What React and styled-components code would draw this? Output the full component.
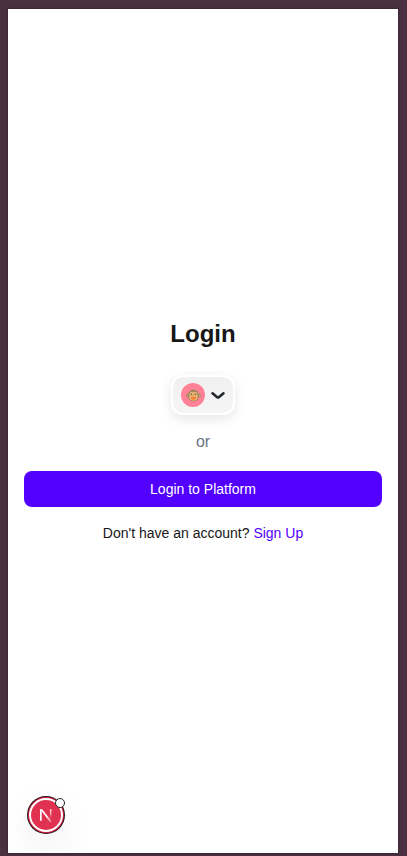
import React from "react";
import styled, { createGlobalStyle } from "styled-components";

const GlobalStyle = createGlobalStyle`
  * { box-sizing: border-box; }
  body { margin: 0; background: #4b3042; font-family: "Liberation Sans", Arial, sans-serif; }
`;

const Desktop = styled.div`
  height: 856px;
  padding: 9px 9px 3px 8px;
  background: #4b3042;
  overflow: hidden;
`;

const Screen = styled.main`
  position: relative;
  display: flex;
  flex-direction: column;
  align-items: center;
  height: 844px;
  padding: 309px 16px 0;
  background: #fff;
  color: #171717;
  box-shadow: 0 0 0 1px #3d2a38, 0 0 4px rgba(25, 10, 25, 0.2);
  overflow: hidden;
`;

const Title = styled.h1`
  margin: 0 0 25px;
  font-size: 24px;
  line-height: 32px;
  font-weight: 700;
`;

const WalletButton = styled.button`
  display: flex;
  align-items: center;
  gap: 6px;
  width: 64px;
  height: 40px;
  padding: 0 8px;
  border: 2px solid #fff;
  border-radius: 12px;
  background: linear-gradient(#f0f0f0, #f5f5f5) padding-box;
  box-shadow: 0 4px 12px rgba(0, 0, 0, 0.1);
`;

const Avatar = styled.span`
  display: flex;
  flex: none;
  align-items: center;
  justify-content: center;
  width: 24px;
  height: 24px;
  border-radius: 50%;
  background: #ff8296;
`;

const Divider = styled.p`
  margin: 15px 0 17px;
  color: #6a7282;
  font-size: 16px;
  line-height: 24px;
`;

const PrimaryButton = styled.button`
  width: 100%;
  height: 36px;
  border: 0;
  border-radius: 8px;
  background: #5200ff;
  color: #fff;
  font: 14px/20px "Liberation Sans", Arial, sans-serif;
`;

const Prompt = styled.p`
  margin: 16px 0 0;
  font-size: 14px;
  line-height: 20px;
`;

const SignUp = styled.a`
  color: #5200ff;
`;

const DevBadge = styled.div`
  position: absolute;
  left: 19px;
  top: 787px;
  width: 38px;
  height: 38px;
  border-radius: 50%;
  box-shadow: 0 14px 36px rgba(0, 0, 0, 0.075);
  svg { display: block; overflow: visible; }
`;

function Monkey() {
  return (
    <svg width="15" height="13" viewBox="0 0 15 13">
      <circle cx="2" cy="6.5" r="1.9" fill="#b08a62" />
      <circle cx="13" cy="6.5" r="1.9" fill="#b08a62" />
      <circle cx="2.1" cy="6.5" r="0.9" fill="#d9a972" />
      <circle cx="12.9" cy="6.5" r="0.9" fill="#d9a972" />
      <ellipse cx="7.5" cy="6.4" rx="5.6" ry="6" fill="#a5835d" />
      <path d="M7.5 3.2C5.4 1.9 3.2 3.1 3.5 5.8 2.6 8.3 3.5 11.7 7.5 11.7s4.9-3.4 4-5.9C11.8 3.1 9.6 1.9 7.5 3.2Z" fill="#e2b372" />
      <circle cx="5.5" cy="5.3" r="0.7" fill="#605340" />
      <circle cx="9.5" cy="5.3" r="0.7" fill="#605340" />
      <path d="M6.9 6.5h1.2" stroke="#a77d4e" strokeWidth=".5" />
      <path d="M5 7.7Q7.5 8.2 10 7.7 9.8 10.7 7.5 10.7T5 7.7Z" fill="#ff7a2e" />
    </svg>
  );
}

function Chevron() {
  return (
    <svg width="14" height="8" viewBox="0 0 14 8" fill="none">
      <path d="M1.5 2.2 6.2 6.2Q7 6.8 7.8 6.2L12.5 2.2" stroke="#22252b" strokeWidth="2.5" strokeLinecap="round" strokeLinejoin="round" />
    </svg>
  );
}

function DevIcon() {
  return (
    <svg width="38" height="38" viewBox="0 0 38 38" fill="none">
      <defs>
        <linearGradient id="diagonal" x1="20" y1="20" x2="24.5" y2="26" gradientUnits="userSpaceOnUse">
          <stop stopColor="#fff" />
          <stop offset="1" stopColor="#fff" stopOpacity="0.25" />
        </linearGradient>
        <linearGradient id="stem" x1="23.6" y1="14" x2="23.6" y2="22" gradientUnits="userSpaceOnUse">
          <stop stopColor="#fff" stopOpacity="0.9" />
          <stop offset="1" stopColor="#fff" stopOpacity="0" />
        </linearGradient>
      </defs>
      <circle cx="19" cy="19" r="19" fill="#24141a" />
      <circle cx="19" cy="19" r="18" fill="#d71f40" />
      <circle cx="19" cy="19" r="17" fill="#fff" />
      <circle cx="19" cy="19" r="15" fill="#e03250" />
      <path d="M13 13.3h1.7v11.5H13Z" fill="#fff" />
      <path d="M13.2 13.3h2L24.7 25.3 23.2 26.5Z" fill="url(#diagonal)" />
      <path d="M22.9 13.3h1.6V22h-1.6Z" fill="url(#stem)" />
      <circle cx="33" cy="7" r="4.5" fill="#fff" stroke="#242424" />
    </svg>
  );
}

export default function App() {
  return (
    <>
      <GlobalStyle />
      <Desktop>
        <Screen>
          <Title>Login</Title>
          <WalletButton aria-label="Account">
            <Avatar><Monkey /></Avatar>
            <Chevron />
          </WalletButton>
          <Divider>or</Divider>
          <PrimaryButton>Login to Platform</PrimaryButton>
          <Prompt>Don't have an account? <SignUp>Sign Up</SignUp></Prompt>
          <DevBadge><DevIcon /></DevBadge>
        </Screen>
      </Desktop>
    </>
  );
}
